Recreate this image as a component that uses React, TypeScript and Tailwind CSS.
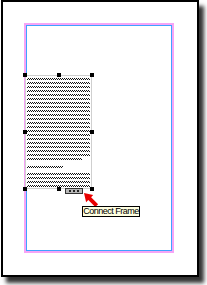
const greek =
  "h-[2px] bg-[conic-gradient(#111_25%,#fff_0_50%,#111_0_75%,#fff_0)] bg-size-[2px_2px]";

function Handle() {
  return <div className="h-[4px] w-[4px] bg-black" />;
}

function HandleRow({ middle = true }: { middle?: boolean }) {
  return (
    <div className="flex items-center justify-between">
      <Handle />
      {middle ? <Handle /> : null}
      <Handle />
    </div>
  );
}

export default function App() {
  const para1 = Array.from({ length: 21 });
  const para2 = Array.from({ length: 4 });

  return (
    <div className="relative h-[285px] w-[207px] overflow-hidden bg-white font-['Liberation_Sans',Arial,sans-serif]">
      {/* page with margin guides */}
      <div className="ml-[1px] h-[277px] w-[198px] border-2 border-black bg-white pl-[21px] pt-[21px] shadow-[5px_6px_4px_rgba(0,0,0,0.8)]">
        <div className="h-[230px] w-[150px] border-2 border-[#f6a4f6]">
          <div className="h-full w-full border border-[#3ea2ff]" />
        </div>
      </div>

      {/* selected text frame */}
      <div className="absolute left-[23px] top-[73px] h-[118px] w-[71px] p-[2px]">
        <div className="h-full w-full border border-[#cfcfcf] bg-white px-[1px] pt-[2px]">
          <div className="flex flex-col gap-[2px]">
            {para1.map((_, i) => (
              <div key={i} className={`${greek} ${i === 20 ? "w-[55px]" : "w-full"}`} />
            ))}
            <div className="h-[2px]" />
            <div className={`${greek} w-[36px]`} />
            <div className="h-[1px]" />
            {para2.map((_, i) => (
              <div key={i} className={`${greek} w-full`} />
            ))}
          </div>
        </div>
        <div className="absolute inset-0 flex flex-col justify-between">
          <HandleRow />
          <HandleRow middle={false} />
          <HandleRow />
        </div>
      </div>

      {/* out port */}
      <div className="absolute left-[65px] top-[188px] flex h-[6px] w-[18px] items-center justify-center gap-[2px] border border-[#333] bg-[#b8b8b8]">
        <div className="h-[2px] w-[2px] bg-[#222]" />
        <div className="h-[2px] w-[2px] bg-[#222]" />
        <div className="h-[2px] w-[2px] bg-[#222]" />
      </div>

      {/* red arrow */}
      <svg className="absolute left-[80px] top-[189px]" width="20" height="20" viewBox="0 0 20 20">
        <polygon
          points="4,4 13.2,6.1 11.1,8.3 18.1,15.3 15.3,18.1 8.3,11.1 6.1,13.2"
          fill="#e80000"
        />
      </svg>

      {/* tooltip */}
      <div className="absolute left-[82px] top-[206px] flex h-[11px] w-[58px] items-center justify-center border border-black bg-[#ffffe1] text-[9px] leading-none tracking-[-0.5px] text-black">
        Connect Frame
      </div>
    </div>
  );
}
